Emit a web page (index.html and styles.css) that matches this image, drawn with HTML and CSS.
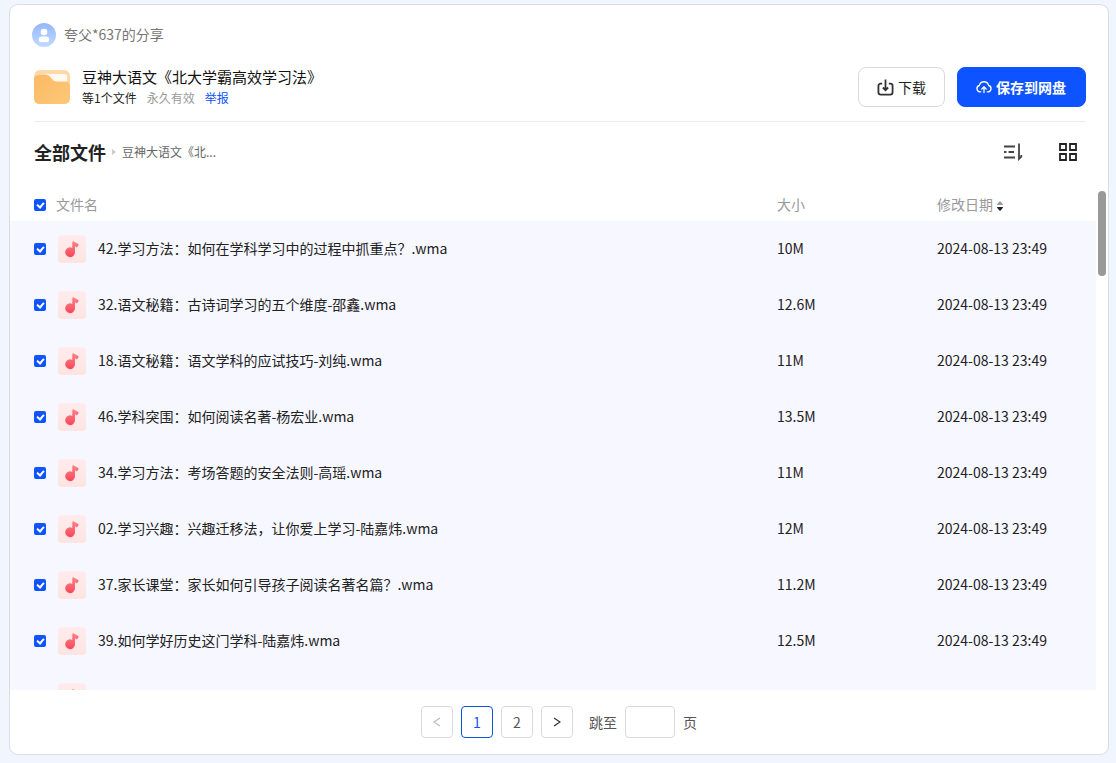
FILE: index.html
```html
<!DOCTYPE html>
<html lang="zh-CN">
<head>
<meta charset="utf-8">
<title>豆神大语文《北大学霸高效学习法》</title>
<link rel="stylesheet" href="styles.css">
</head>
<body>
<svg class="defs" aria-hidden="true">
  <defs>
    <linearGradient id="note-bg" x1="0" y1="0" x2="0" y2="1"><stop offset="0" stop-color="#ffecec"/><stop offset="1" stop-color="#ffe3e3"/></linearGradient>
    <linearGradient id="note-fg" x1="0" y1="0" x2="0" y2="1"><stop offset="0" stop-color="#ff8188"/><stop offset="1" stop-color="#f6485a"/></linearGradient>
    <symbol id="music" viewBox="0 0 28 28">
      <rect width="28" height="28" rx="4" fill="url(#note-bg)"/>
      <path d="M14.300 7q0-1.200 1.200-.7c1.500 1.200 3 1.600 4.700 2.600.6.400.6.800.3 1.300l-1.200 1.800c-.3.400-.7.400-1.100.1l-1.200-.9v6.100a4.900 4.900 0 1 1-2.700-4.400z" fill="url(#note-fg)"/>
    </symbol>
  </defs>
</svg>
<main class="card">
  <header class="share">
    <div class="owner">
      <svg class="avatar" viewBox="0 0 24 24" aria-hidden="true">
        <defs><linearGradient id="av" x1="0" y1="0" x2="0" y2="1"><stop offset="0" stop-color="#94b8fb"/><stop offset="1" stop-color="#c3d9ff"/></linearGradient></defs>
        <circle cx="12" cy="12" r="12" fill="url(#av)"/>
        <circle cx="12" cy="9" r="3.300" fill="#fff"/>
        <rect x="6.800" y="13.500" width="10.400" height="5.800" rx="2.900" fill="#fff"/>
      </svg>
      <span>夸父*637的分享</span>
    </div>
    <div class="summary">
      <svg class="folder" viewBox="0 0 36 34" aria-hidden="true">
        <defs><linearGradient id="fo" x1="0" y1="0" x2="1" y2="1"><stop offset="0" stop-color="#fbb965"/><stop offset="1" stop-color="#fdc877"/></linearGradient></defs>
        <rect width="36" height="34" rx="6" fill="#fed9a8"/>
        <path d="M12 4h18q3 0 3 3v6H12z" fill="#fffaf0"/>
        <path d="M0 10q0-5 5-5h7c2 0 3 .6 4.300 2l2.500 2.800c1 1.200 2 1.700 3.700 1.700H31q5 0 5 5V28q0 6-6 6H6q-6 0-6-6z" fill="url(#fo)"/>
      </svg>
      <div class="info">
        <h1>豆神大语文《北大学霸高效学习法》</h1>
        <p><span>等1个文件</span><span class="muted">永久有效</span><a href="#report">举报</a></p>
      </div>
      <div class="actions">
        <button class="btn" type="button">
          <svg class="ico-down" viewBox="0 0 18 18" fill="none" stroke="#333" stroke-width="1.900" aria-hidden="true"><path d="M5.500 5H4Q1.500 5 1.500 7.500V14Q1.500 16.500 4 16.500h10q2.500 0 2.500-2.500V7.500Q16.500 5 14 5h-1.500M9 .5v10.500M6.200 9 9 11.800 11.800 9"/></svg>
          <span>下载</span>
        </button>
        <button class="btn primary" type="button">
          <svg class="ico-cloud" viewBox="0 0 16 16" fill="none" stroke="#fff" stroke-width="1.300" stroke-linecap="round" stroke-linejoin="round" aria-hidden="true"><path d="M4.800 12.800H4a3.200 3.200 0 0 1-.6-6.300 4.700 4.700 0 0 1 9.200 0 3.200 3.200 0 0 1-.6 6.300h-.8M8 13.500V8M5.800 10 8 7.800l2.200 2.200"/></svg>
          <span>保存到网盘</span>
        </button>
      </div>
    </div>
  </header>

  <div class="toolbar">
    <nav class="crumbs" aria-label="路径">
      <a class="root" href="#all">全部文件</a>
      <svg class="arrow" viewBox="0 0 4 6" aria-hidden="true"><path d="M0 0l4 3-4 3z" fill="#ccc"/></svg>
      <a href="#folder">豆神大语文《北...</a>
    </nav>
    <button class="tool" type="button" aria-label="排序">
      <svg viewBox="0 0 20 18" fill="none" stroke="#444" stroke-width="1.800" aria-hidden="true"><path d="M1 3.500h11M5.500 9H11M1 9h2.500M1 14.500h11M16 .5v15.500l2.300-2.300V12"/></svg>
    </button>
    <button class="tool" type="button" aria-label="网格视图">
      <svg viewBox="0 0 20 18" fill="none" stroke="#222" stroke-width="1.800" aria-hidden="true"><path d="M2 1h6v6H2zM12 1h6v6h-6zM2 11h6v6H2zM12 11h6v6h-6z"/></svg>
    </button>
  </div>

  <div class="listing">
    <div class="scroller">
      <table class="files">
        <thead>
          <tr>
            <th class="c-check"><input type="checkbox" aria-label="全选" checked></th>
            <th class="c-name">文件名</th>
            <th class="c-size">大小</th>
            <th class="c-date">修改日期<svg class="sort" viewBox="0 0 6 10" aria-hidden="true"><path d="M0 4q0-1 3-4 3 3 3 4z" fill="#999"/><path d="M0 6h6q0 1-3 4-3-3-3-4z" fill="#222"/></svg></th>
          </tr>
        </thead>
        <tbody id="rows"></tbody>
      </table>
    </div>
    <div class="track"><div class="thumb"></div></div>
  </div>

  <footer class="pager">
    <button class="page" type="button" aria-label="上一页" disabled><svg viewBox="0 0 8 10"><path d="M7 1 1 5l6 4"/></svg></button>
    <button class="page current" type="button">1</button>
    <button class="page" type="button">2</button>
    <button class="page" type="button" aria-label="下一页"><svg viewBox="0 0 8 10"><path d="m1 1 6 4-6 4"/></svg></button>
    <label class="jump" for="jump">跳至</label>
    <input class="jump-input" id="jump" type="text">
    <span>页</span>
  </footer>
</main>
<script src="app.js"></script>
</body>
</html>
```
FILE: styles.css
```css
*, *::before { box-sizing: border-box; }
body {
  margin: 0;
  height: 100vh;
  padding: 4px 7px 8px 9px;
  background: #f1f5fe;
  color: #222;
  font: 14px/20px "Noto Sans CJK SC", "Noto Sans", sans-serif;
}
.defs { position: absolute; width: 0; height: 0; }
button, input { font: inherit; color: inherit; }
a { color: inherit; text-decoration: none; }
.card {
  display: flex;
  flex-direction: column;
  height: 100%;
  background: #fff;
  border: 1px solid #dcdde3;
  border-radius: 9px;
  overflow: hidden;
}
.share {
  margin: 0 23px 0 24px;
  padding: 18px 0 13px;
  border-bottom: 1px solid #ececec;
}
.owner { display: flex; align-items: center; gap: 8px; margin-left: -2px; color: #777; }
.owner span { padding-bottom: 2px; }
.avatar { width: 24px; height: 24px; }
.summary { display: flex; align-items: center; margin-top: 19px; margin-right: -1px; }
.folder { width: 36px; height: 34px; }
.info { flex: 1; margin-left: 12px; }
h1 { margin: 0; font-size: 15px; font-weight: 400; line-height: 22px; color: #111; }
.info p { display: flex; gap: 10px; margin: 0; font-size: 12px; line-height: 20px; }
.muted { color: #999; }
.info a { color: #0d53ff; }
.actions { display: flex; gap: 12px; }
.btn {
  display: flex;
  align-items: center;
  gap: 4px;
  height: 40px;
  padding: 0 18px;
  border: 1px solid #d9d9d9;
  border-radius: 8px;
  background: #fff;
}
.btn span { padding-bottom: 1px; }
.primary { padding-right: 19px; border-color: #0d53ff; background: #0d53ff; color: #fff; font-weight: 700; }
.ico-down { width: 17px; height: 17px; }
.ico-cloud { width: 16px; height: 16px; }
.toolbar {
  display: flex;
  align-items: center;
  gap: 35px;
  padding: 15px 30px 0 24px;
}
.crumbs { display: flex; flex: 1; align-items: center; gap: 6px; font-size: 12px; line-height: 30px; color: #666; }
.root { font-size: 18px; font-weight: 700; color: #222; }
.arrow { width: 4px; height: 6px; }
.tool { display: flex; padding: 0; border: 0; background: none; }
.tool svg { width: 20px; height: 18px; }
.listing { display: flex; flex: 1; min-height: 0; margin-top: 22px; }
.scroller { flex: 1; overflow: hidden; }
.track { width: 12px; padding: 2px; }
.thumb { width: 8px; height: 85px; border-radius: 4px; background: #999; }
.files { width: 100%; border-collapse: collapse; table-layout: fixed; }
.files th { height: 32px; padding: 0 0 2px; text-align: left; font-weight: 400; color: #999; }
.files td { height: 56px; padding: 0 0 2px; background: #f6f7ff; }
.files .c-check { width: 46px; padding: 0 0 0 24px; }
.files .c-icon { padding: 0; }
.c-size { width: 160px; }
.c-date { width: 159px; }
.file { display: flex; align-items: center; gap: 12px; padding-left: 2px; }
.file svg { width: 28px; height: 28px; }
.file span { padding-bottom: 2px; }
.sort { width: 6px; height: 10px; margin-left: 4px; vertical-align: -1px; }
input[type="checkbox"] {
  display: block;
  appearance: none;
  width: 12px;
  height: 12px;
  margin: 0;
  border-radius: 2px;
  background: #0d53ff;
}
input[type="checkbox"]::before {
  content: "";
  display: block;
  width: 5px;
  height: 7px;
  margin: 0 auto;
  border: solid #fff;
  border-width: 0 2px 2px 0;
  transform: translateY(2px) rotate(40deg);
}
.pager {
  display: flex;
  align-items: center;
  justify-content: center;
  gap: 8px;
  height: 64px;
  color: #555;
}
.page {
  display: flex;
  align-items: center;
  justify-content: center;
  width: 32px;
  height: 32px;
  padding: 0;
  border: 1px solid #d9d9d9;
  border-radius: 4px;
  background: #fff;
}
.page svg { width: 8px; height: 10px; fill: none; stroke: #333; stroke-width: 1.2; }
.page:disabled svg { stroke: #bbb; }
.current { border-color: #0d53d8; color: #0d53ff; }
.jump { margin-left: 8px; }
.jump-input { width: 50px; height: 32px; border: 1px solid #d9d9d9; border-radius: 4px; background: #fff; }
```
FILE: app.js
```js
const files = [
  ["42.学习方法：如何在学科学习中的过程中抓重点？.wma", "10M"],
  ["32.语文秘籍：古诗词学习的五个维度-邵鑫.wma", "12.6M"],
  ["18.语文秘籍：语文学科的应试技巧-刘纯.wma", "11M"],
  ["46.学科突围：如何阅读名著-杨宏业.wma", "13.5M"],
  ["34.学习方法：考场答题的安全法则-高瑶.wma", "11M"],
  ["02.学习兴趣：兴趣迁移法，让你爱上学习-陆嘉炜.wma", "12M"],
  ["37.家长课堂：家长如何引导孩子阅读名著名篇？.wma", "11.2M"],
  ["39.如何学好历史这门学科-陆嘉炜.wma", "12.5M"],
  ["", ""]
];
document.getElementById("rows").innerHTML = files.map(([name, size]) => `
  <tr>
    <td class="c-check"><input type="checkbox" aria-label="${name || "选择"}" checked></td>
    <td class="c-icon"><div class="file"><svg aria-hidden="true"><use href="#music"/></svg><span>${name}</span></div></td>
    <td>${size}</td>
    <td>${name ? "2024-08-13 23:49" : ""}</td>
  </tr>`).join("");
```
